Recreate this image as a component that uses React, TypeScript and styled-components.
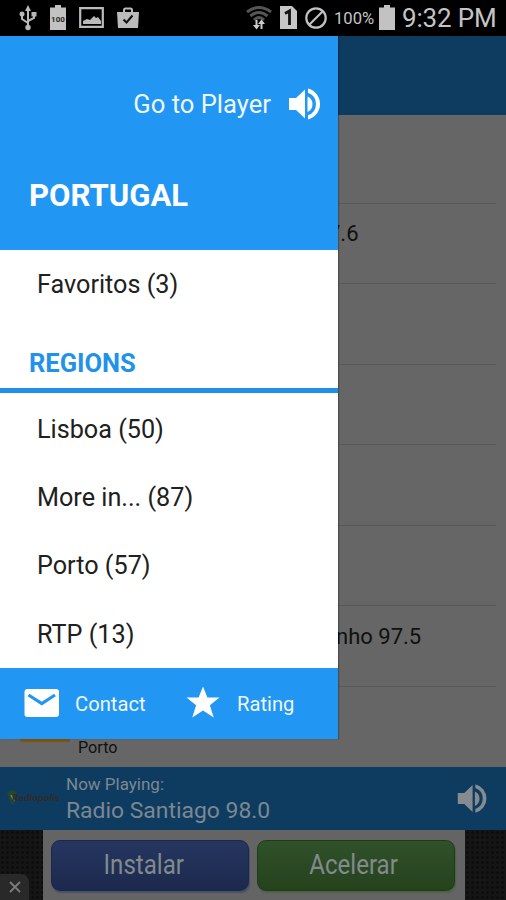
import React from "react";
import styled, { createGlobalStyle } from "styled-components";

const GlobalStyle = createGlobalStyle`
  * { box-sizing: border-box; }
  body { margin: 0; background: #000; }
`;

const Screen = styled.div`
  width: 506px;
  height: 900px;
  display: flex;
  flex-direction: column;
  overflow: hidden;
  font-family: Roboto, sans-serif;
  white-space: nowrap;
`;

const StatusBar = styled.header`
  flex: 0 0 36px;
  display: flex;
  justify-content: space-between;
  padding: 0 10px 0 19px;
  background: #000;
  color: #c4c4c4;
`;

const StatusGroup = styled.div<{ $gap: number }>`
  display: flex;
  align-items: center;
  gap: ${(p) => p.$gap}px;
  padding-bottom: 1px;
  svg { display: block; }
`;

const BatteryLevel = styled.span`
  font-size: 16.6px;
  width: 40px;
  margin: 1px -3px 0 -1px;
`;

const Clock = styled.span`
  font-size: 26px;
  line-height: 34px;
  width: 94px;
  margin-left: -1px;
  letter-spacing: -0.15px;
`;

const Body = styled.div`
  flex: 1;
  position: relative;
  display: flex;
  flex-direction: column;
  min-height: 0;
`;

const AppHeader = styled.div`
  flex: 0 0 79px;
  background: #0d3c60;
`;

const StationList = styled.div`
  flex: 1;
  min-height: 0;
  display: grid;
  grid-template-rows: 88.5px repeat(6, 80.5px) 1fr;
  padding-right: 10px;
  background: #666;
  overflow: hidden;
`;

const Station = styled.div<{ $indent?: number }>`
  border-bottom: 1px solid #585858;
  padding: 17.5px 0 0 ${(p) => p.$indent ?? 20}px;
  font-size: 22px;
  line-height: 26px;
  color: #101010;
`;

const LastStation = styled.div`
  display: flex;
  gap: 8px;
  padding-left: 20px;
  font-size: 16.2px;
  line-height: 20px;
  color: #101010;
`;

const StationArt = styled.div`
  width: 50px;
  height: 55px;
  background: #80500c;
  border-radius: 2px;
`;

const StationCity = styled.div`
  padding-top: 51.5px;
`;

const NowPlaying = styled.div`
  flex: 0 0 63px;
  display: flex;
  align-items: center;
  padding: 0 14px 0 6px;
  background: #0d3c60;
  color: #7d8790;
`;

const TrackInfo = styled.div`
  flex: 1;
  padding-left: 4px;
`;

const TrackLabel = styled.div`
  font-size: 17px;
  line-height: 24px;
`;

const TrackName = styled.div`
  font-size: 22.9px;
  line-height: 30px;
`;

const AdBar = styled.div`
  flex: 0 0 70px;
  display: flex;
  background-color: #151515;
  background-image: radial-gradient(#0c0c0c 1px, transparent 1.5px);
  background-size: 5px 5px;
`;

const AdClose = styled.div`
  flex: 0 0 43px;
  display: flex;
  align-items: flex-end;
`;

const CloseTab = styled.div`
  width: 29px;
  height: 26px;
  display: grid;
  place-items: center;
  border-top-right-radius: 8px;
  background: #292929;
`;

const AdPanel = styled.div`
  flex: 0 0 422px;
  display: grid;
  grid-template-columns: 198px 198px;
  gap: 8px;
  padding: 10px 10px 8px 8px;
  background: #646464;
`;

const AdButton = styled.div<{ $tone: "blue" | "green" }>`
  height: 51px;
  display: flex;
  justify-content: center;
  border-radius: 9px;
  font-size: 28px;
  line-height: 48px;
  color: #818a8c;
  padding-right: ${(p) => (p.$tone === "blue" ? 13 : 5)}px;
  border: 1px solid ${(p) => (p.$tone === "blue" ? "#1b284b" : "#203b1a")};
  background: ${(p) =>
    p.$tone === "blue"
      ? "linear-gradient(#26365f, #1c294e)"
      : "linear-gradient(#30512a, #25421d)"};
  box-shadow: 1px 2px 1px ${(p) => (p.$tone === "blue" ? "#48516a" : "#4b6245")};
  span { transform: scaleX(0.86); }
`;

const Drawer = styled.aside`
  position: absolute;
  left: 0;
  top: 0;
  width: 338px;
  height: 703px;
  display: flex;
  flex-direction: column;
  background: #fff;
  box-shadow: 1px 0 1px rgba(0, 0, 0, 0.25);
  svg { display: block; }
`;

const DrawerHead = styled.div`
  flex: 0 0 213.5px;
  background: #2196f3;
  color: #fff;
`;

const PlayerLink = styled.div`
  display: flex;
  align-items: center;
  justify-content: flex-end;
  gap: 15px;
  height: 40px;
  margin-top: 48px;
  padding-right: 12px;
  font-size: 25.6px;
  color: #eef7ff;
`;

const Country = styled.div`
  margin: 52px 0 0 29px;
  font-size: 31.1px;
  line-height: 40px;
  font-weight: 700;
`;

const MenuItem = styled.div`
  flex: 0 0 68.4px;
  display: flex;
  align-items: center;
  padding: 2px 0 0 37px;
  font-size: 25.2px;
  line-height: 30px;
  color: #202020;
`;

const SectionTitle = styled.div`
  flex: 0 0 75.5px;
  padding: 32px 0 0 29px;
  border-bottom: 5px solid #1e90ea;
  font-size: 25.5px;
  line-height: 27px;
  font-weight: 700;
  color: #2192ec;
`;

const Regions = styled.div`
  flex: 1;
  display: flex;
  flex-direction: column;
  min-height: 0;
  padding-top: 1px;
`;

const DrawerFoot = styled.div`
  flex: 0 0 71px;
  display: flex;
  align-items: center;
  padding-left: 21px;
  background: #2196f3;
  color: #eef7ff;
  font-size: 20.2px;
  svg { margin-top: -1px; }
`;

const FootAction = styled.div<{ $width: number; $gap: number }>`
  display: flex;
  align-items: center;
  gap: ${(p) => p.$gap}px;
  width: ${(p) => p.$width}px;
`;

const SpeakerIcon = ({ size, color }: { size: number; color: string }) => (
  <svg width={size} height={size} viewBox="0 0 40 40" fill={color}>
    <path d="M3 14v12h7L19 34.500V5.500L10 14z" />
    <path d="M21.500 12.500v15.500a8.500 8.500 0 0 0 0-15.500z" />
    <path d="M22 4.500v4.200a12 12 0 0 1 0 22.600v4.200A16 16 0 0 0 22 4.500z" />
  </svg>
);

const UsbIcon = () => (
  <svg width="18" height="27" viewBox="0 0 18 27" fill="none" stroke="#b8b8b8" strokeWidth="2">
    <path d="M9 4v18M9 19l-6-4V9M9 17l6-3V8" />
    <path d="M6 7l3-6 3 6z" fill="#b8b8b8" stroke="none" />
    <circle cx="9" cy="23.500" r="2.700" fill="#b8b8b8" stroke="none" />
    <circle cx="3" cy="10" r="2.500" fill="#b8b8b8" stroke="none" />
    <path d="M12.500 8h5v4.500h-5z" fill="#b8b8b8" stroke="none" />
  </svg>
);

const BatteryIcon = ({ label }: { label?: string }) => (
  <svg width="16" height="26" viewBox="0 0 16 26">
    <path d="M5 0h6v2.500h5V25H0V2.500h5z" fill="#c2c2c2" />
    {label && (
      <text x="8" y="17" textAnchor="middle" fontSize="8" fontWeight="700" fontFamily="Roboto, sans-serif" fill="#292929">
        {label}
      </text>
    )}
  </svg>
);

const PictureIcon = () => (
  <svg width="25" height="21" viewBox="0 0 25 21">
    <path d="M1.200 1.200h22.600v18.600H1.200z" fill="none" stroke="#bbb" strokeWidth="2.200" />
    <path d="M4 17v-3l4-2 3 1 4-4 2 2 2-1 3 4v3z" fill="#bbb" />
  </svg>
);

const CheckBagIcon = () => (
  <svg width="22" height="22" viewBox="0 0 22 22">
    <path d="M7 6V3q0-1.500 1.500-1.500h5Q15 1.500 15 3v3" fill="none" stroke="#bbb" strokeWidth="2" />
    <path d="M0 5h22l-1 16H1z" fill="#bbb" />
    <path d="M6.500 12.500l3 3 6-7" fill="none" stroke="#111" strokeWidth="2" />
  </svg>
);

const WifiIcon = () => (
  <svg width="26" height="24" viewBox="0 0 26 24" fill="none">
    <g stroke="#555" strokeWidth="3">
      <path d="M1 6Q13-3 25 6" />
      <path d="M4.500 10Q13 3 21.500 10" />
      <path d="M8 14Q13 9 18 14" />
    </g>
    <path d="M10.500 14v8M15.500 23v-8" stroke="#ccc" strokeWidth="2" />
    <path d="M7 19h7L10.500 23.500zM12 18h7L15.500 13.500z" fill="#ccc" />
  </svg>
);

const SimIcon = () => (
  <svg width="17" height="23" viewBox="0 0 17 23">
    <path d="M0 0h12l5 5v18H0z" fill="#c6c6c6" />
    <path d="M5 7.500l4.500-2.500V19" fill="none" stroke="#111" strokeWidth="2.800" />
  </svg>
);

const BlockedIcon = () => (
  <svg width="22" height="22" viewBox="0 0 22 22" fill="none" stroke="#c2c2c2" strokeWidth="2.200">
    <circle cx="11" cy="11" r="9.700" />
    <path d="M4.500 17.500l13-13" />
  </svg>
);

const MailIcon = () => (
  <svg width="41" height="36" viewBox="0 0 41 36">
    <rect x="3.500" y="4" width="34.500" height="28" rx="3" fill="#fff" />
    <path d="M7.500 10L20.800 18.500 34 10" fill="none" stroke="#2196f3" strokeWidth="3.200" />
  </svg>
);

const StarIcon = () => (
  <svg width="36" height="36" viewBox="0 0 36 36" fill="#fff">
    <path d="M18 1.500l4.400 11H34.500l-9.600 7.700 3.800 12.300L18 25.500 7.300 32.500l3.800-12.300L1.500 12.500h12.100z" />
  </svg>
);

const StationLogo = () => (
  <svg width="56" height="24" viewBox="0 0 56 24">
    <path d="M1 6l5-3 4 2-1 9-2 4Q4 15 1 6z" fill="#27472d" />
    <path d="M5 8l3 6" stroke="#76806f" strokeWidth="1.500" />
    <text x="6" y="14" fontSize="9" fontWeight="700" fontStyle="italic" fontFamily="Roboto, sans-serif" fill="#302b2b" textLength="48" lengthAdjust="spacingAndGlyphs">
      Radiopolis
    </text>
  </svg>
);

const CloseIcon = () => (
  <svg width="14" height="14" viewBox="0 0 14 14" stroke="#7b7b7b" strokeWidth="1.800">
    <path d="M2 2l10 10M12 2L2 12" />
  </svg>
);

const regions = ["Lisboa (50)", "More in... (87)", "Porto (57)", "RTP (13)"];

export default function App() {
  return (
    <>
      <GlobalStyle />
      <Screen>
        <StatusBar>
          <StatusGroup $gap={13}>
            <UsbIcon />
            <BatteryIcon label="100" />
            <PictureIcon />
            <CheckBagIcon />
          </StatusGroup>
          <StatusGroup $gap={8}>
            <WifiIcon />
            <SimIcon />
            <BlockedIcon />
            <BatteryLevel>100%</BatteryLevel>
            <BatteryIcon />
            <Clock>9:32 PM</Clock>
          </StatusGroup>
        </StatusBar>
        <Body>
          <AppHeader />
          <StationList>
            <Station />
            <Station $indent={328}>7.6</Station>
            <Station />
            <Station />
            <Station />
            <Station />
            <Station $indent={336}>nho 97.5</Station>
            <LastStation>
              <StationArt />
              <StationCity>Porto</StationCity>
            </LastStation>
          </StationList>
          <NowPlaying>
            <StationLogo />
            <TrackInfo>
              <TrackLabel>Now Playing:</TrackLabel>
              <TrackName>Radio Santiago 98.0</TrackName>
            </TrackInfo>
            <SpeakerIcon size={37} color="#858b90" />
          </NowPlaying>
          <AdBar>
            <AdClose>
              <CloseTab>
                <CloseIcon />
              </CloseTab>
            </AdClose>
            <AdPanel>
              <AdButton $tone="blue">
                <span>Instalar</span>
              </AdButton>
              <AdButton $tone="green">
                <span>Acelerar</span>
              </AdButton>
            </AdPanel>
          </AdBar>
          <Drawer>
            <DrawerHead>
              <PlayerLink>
                Go to Player
                <SpeakerIcon size={40} color="#fff" />
              </PlayerLink>
              <Country>PORTUGAL</Country>
            </DrawerHead>
            <MenuItem>Favoritos (3)</MenuItem>
            <SectionTitle>REGIONS</SectionTitle>
            <Regions>
              {regions.map((name) => (
                <MenuItem key={name}>{name}</MenuItem>
              ))}
            </Regions>
            <DrawerFoot>
              <FootAction $width={164} $gap={13}>
                <MailIcon />
                Contact
              </FootAction>
              <FootAction $width={130} $gap={16}>
                <StarIcon />
                Rating
              </FootAction>
            </DrawerFoot>
          </Drawer>
        </Body>
      </Screen>
    </>
  );
}
